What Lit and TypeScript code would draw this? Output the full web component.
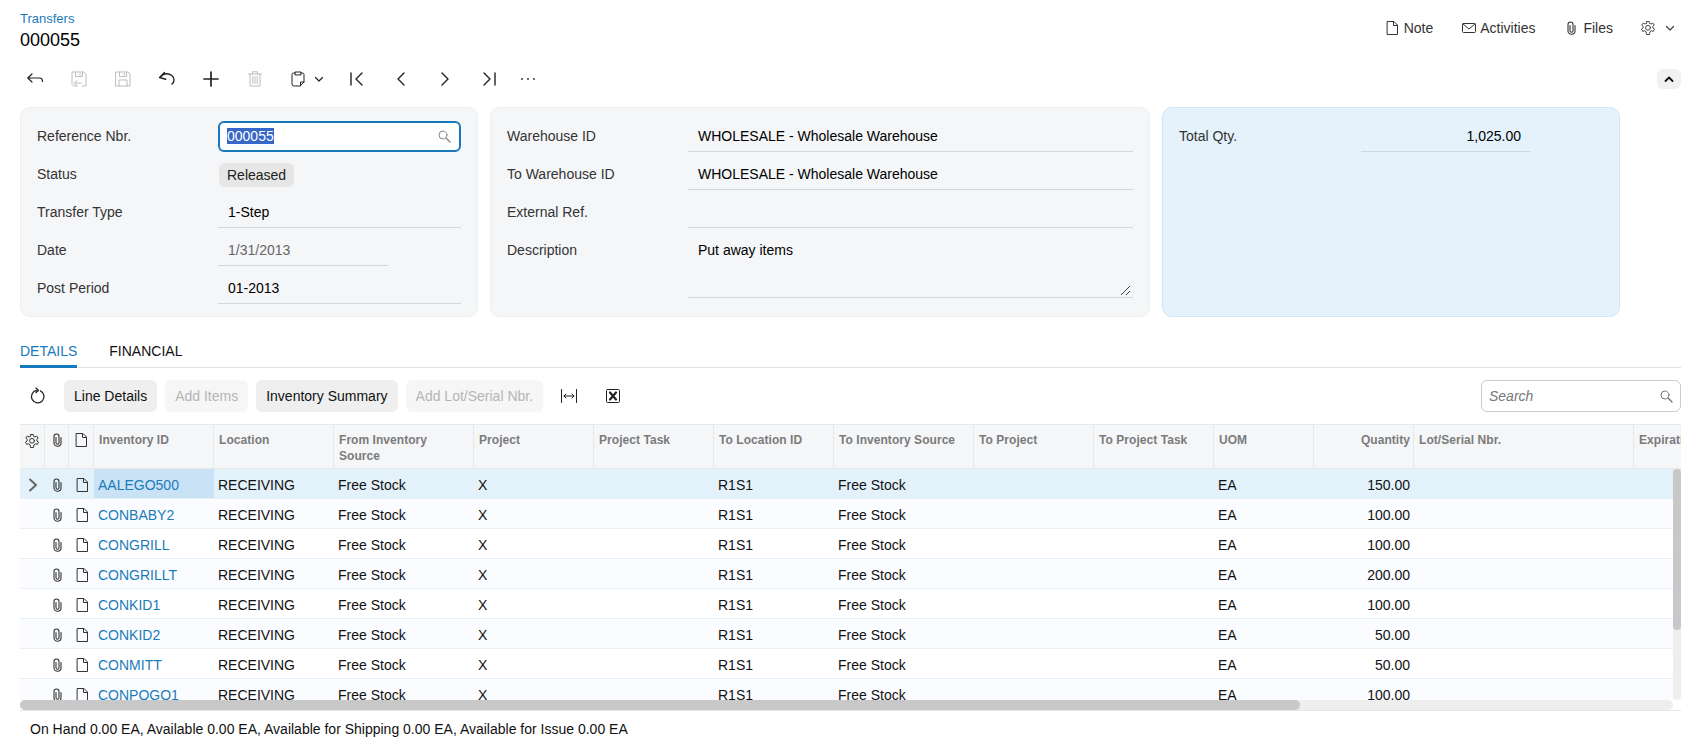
import { LitElement, html, css, svg } from "lit";
import { customElement } from "lit/decorators.js";

const s = (w: number, body: unknown, cls = "") => html`<svg class="ic ${cls}" width="${w}" height="${w}" viewBox="0 0 ${w} ${w}" fill="none" stroke="currentColor" stroke-width="1" stroke-linecap="round" stroke-linejoin="round">${body}</svg>`;

const note = () => s(14, svg`<path d="M2.5 .5H9L12.5 4V13.5H2.5ZM8.5 .5V4.5H12.5"/>`);
const clip = () => s(14, svg`<path d="M11 4.5V10C11 12 9.2 13.2 7.5 13.2S4 12 4 10V3.5C4 2 5.2 1 6.5 1S9 2 9 3.5V9.8C9 10.7 8.4 11.2 7.5 11.2S6 10.7 6 9.8V4.5" stroke-width="1.1"/>`);
const gear = () => s(16, svg`<path d="M6.8 1.5H9.2L9.6 3.4 11 4 12.7 3 14.2 5 12.9 6.4V8L14.5 9.2 13.3 11.4 11.3 10.8 10 11.8 9.4 14.5H6.6L6 11.8 4.7 10.8 2.7 11.4 1.5 9.2 3.1 8V6.4L1.8 5 3.3 3 5 4 6.4 3.4Z"/><circle cx="8" cy="7.8" r="2.4"/>`);
const chev = () => s(10, svg`<path d="M1.5 3.5 5 7 8.5 3.5" stroke-width="1.2"/>`);
const mag = () => s(14, svg`<circle cx="6" cy="6" r="4"/><path d="M9 9 13 13" stroke-width="1.4"/>`);

const topIcons = [
  s(20, svg`<path d="M7 5 2.8 9 7 13M3 9H14.5C16.5 9 17.5 10.3 17.5 12.5" stroke-width="1.2"/>`),
  s(20, svg`<path d="M8 17H4.5L3 15.5V3H15L17 5V17H13M6.5 3V7.5H13.5V3M11 4.2V6.3M12.5 14H5.5M8 11.5 5.3 14 8 16.5"/>`, "off"),
  s(20, svg`<path d="M3 3H15L17 5V17H3ZM6.5 3V7.5H13.5V3M11.2 4.2V6.3M6 17V11H14V17"/>`, "off"),
  s(20, svg`<path d="M7.5 3.5 2.5 8.5 8.7 10.2M3.5 8.3C5 6 7 4.8 10 4.8 13.5 4.8 17 7.5 17 11 17 12.8 16 14.2 15 15" stroke-width="1.4"/>`),
  s(20, svg`<path d="M10 3V17M3 10H17" stroke-width="1.7"/>`),
  s(20, svg`<path d="M3.5 5H16.5M7.5 5V2.8H12.5V5M5 5V17H15V5M7.8 7.5V14.5M10 7.5V14.5M12.2 7.5V14.5"/>`, "off"),
];
const navIcons = [
  s(20, svg`<path d="M4 4V16M15 4 9 10 15 16" stroke-width="1.4"/>`),
  s(20, svg`<path d="M13 4 7 10 13 16" stroke-width="1.4"/>`),
  s(20, svg`<path d="M7 4 13 10 7 16" stroke-width="1.4"/>`),
  s(20, svg`<path d="M16 4V16M5 4 11 10 5 16" stroke-width="1.4"/>`),
];
const dots = s(20, svg`<circle cx="4" cy="10" r=".9" fill="currentColor" stroke="none"/><circle cx="10" cy="10" r=".9" fill="currentColor" stroke="none"/><circle cx="16" cy="10" r=".9" fill="currentColor" stroke="none"/>`);

const heads = ["Inventory ID", "Location", "From Inventory Source", "Project", "Project Task", "To Location ID", "To Inventory Source", "To Project", "To Project Task", "UOM", "Quantity", "Lot/Serial Nbr.", "Expiration Date"];
const rows: [string, string][] = [
  ["AALEGO500", "150.00"], ["CONBABY2", "100.00"], ["CONGRILL", "100.00"], ["CONGRILLT", "200.00"],
  ["CONKID1", "100.00"], ["CONKID2", "50.00"], ["CONMITT", "50.00"], ["CONPOGO1", "100.00"],
];

@customElement("app-root")
export class AppRoot extends LitElement {
  static styles = css`
    :host { display: block; height: 744px; overflow: hidden; background: #fff; color: #000; font: 14px "Liberation Sans", Arial, sans-serif; }
    * { box-sizing: border-box; }
    .ic { display: block; flex: none; }
    .off { color: #bdbdbd; }
    .page { display: flex; flex-direction: column; padding: 0 18px 0 20px; }
    .head { height: 62px; display: flex; justify-content: space-between; }
    .crumb { color: #1a7bb9; font-size: 13px; line-height: 14px; margin-top: 12px; }
    .title { font-size: 18px; line-height: 20px; margin-top: 4px; }
    .actions { display: flex; align-items: center; height: 56px; color: #333; }
    .act { display: flex; align-items: center; gap: 5px; }
    .act.note { margin-right: 29px; }
    .act.mail { margin-right: 29px; gap: 4px; }
    .act.files { margin-right: 27px; gap: 5px; }
    .act.gear { gap: 9px; margin-right: 6px; color: #444; }
    .toolbar { height: 34px; display: flex; align-items: center; margin-left: -7px; color: #222; }
    .tb { width: 44px; display: flex; justify-content: center; flex: none; }
    .tb.clip { width: 58px; justify-content: flex-start; align-items: center; gap: 6px; padding-left: 11px; }
    .tb.dots { margin-left: -5px; }
    .collapse { margin-left: auto; width: 24px; height: 20px; border-radius: 6px; background: #f1f1f1; display: flex; align-items: center; justify-content: center; color: #111; }
    .panels { margin-top: 11px; display: grid; grid-template-columns: 458px 660px 458px; column-gap: 12px; height: 210px; }
    .panel { background: #f5f6f8; border: 1px solid #eceef1; border-radius: 10px; padding: 9px 16px 0 16px; display: flex; flex-direction: column; }
    .panel.blue { background: #e5f2fb; border-color: #d3e6f4; }
    .row { display: grid; height: 38px; align-items: center; flex: none; }
    .p1 .row { grid-template-columns: 181px 1fr; }
    .p2 .row { grid-template-columns: 181px 1fr; }
    .p3 .row { grid-template-columns: 182px 170px; }
    .lbl { color: #333; }
    .field { align-self: start; height: 35px; border-bottom: 1px solid #d3d6da; padding: 3px 10px 0; display: flex; align-items: center; }
    .field.short { width: 170px; color: #666; }
    .field.num { justify-content: flex-end; }
    .input { height: 31px; border: 2px solid #1779bd; border-radius: 6px; background: #fff; display: flex; align-items: center; justify-content: space-between; padding: 0 8px 0 7px; color: #fff; }
    .input span { background: #3566c8; line-height: 16px; }
    .input .ic { color: #888; }
    .chip { justify-self: start; height: 24px; border-radius: 6px; background: #e6e6e6; padding: 0 8px; display: flex; align-items: center; margin: 2px 0 0 1px; color: #222; }
    .desc { height: 70px; align-items: start; }
    .desc .lbl { padding-top: 11px; }
    .desc .field { height: 67px; align-items: flex-start; padding-top: 11px; position: relative; }
    .grip { position: absolute; right: 1px; bottom: 1px; color: #444; }
    .tabs { margin-top: 24px; height: 27px; display: flex; gap: 32px; border-bottom: 1px solid #e0e0e0; }
    .tab { line-height: 21px; height: 27px; color: #111; }
    .tab.on { color: #1a7bb9; border-bottom: 3px solid #1779bd; }
    .gridbar { height: 56px; display: flex; align-items: center; }
    .reload { width: 44px; display: flex; justify-content: flex-start; padding-left: 9px; color: #222; }
    .btn { height: 32px; border-radius: 6px; background: #efefef; padding: 0 10px; display: flex; align-items: center; margin-right: 8px; color: #111; }
    .btn.dis { background: #f6f6f6; color: #b5b5b5; }
    .gi { width: 44px; display: flex; justify-content: center; color: #222; }
    .gi.fit { margin-left: -4px; }
    .search { margin-left: auto; width: 200px; height: 32px; border: 1px solid #ccc; border-radius: 6px; display: flex; align-items: center; justify-content: space-between; padding: 0 7px; color: #777; font-style: italic; }
    .table { position: relative; height: 287px; overflow: hidden; border-bottom: 1px solid #e6e6e6; }
    .line { display: grid; grid-template-columns: 25px 24px 25px 120px 120px 140px 120px 120px 120px 140px 120px 120px 100px 100px 220px 120px; width: max-content; }
    .th { height: 45px; background: #f5f6f8; border-top: 1px solid #e6e8eb; border-bottom: 1px solid #e6e8eb; }
    .th > div { border-right: 1px solid #e6e8eb; padding: 7px 5px 0; font-size: 12px; font-weight: 700; line-height: 16px; color: #7b7b7b; letter-spacing: .05px; overflow: hidden; }
    .th > .ico { padding: 8px 0 0; display: flex; justify-content: center; color: #333; }
    .th > .right { text-align: right; padding-right: 3px; }
    .body { height: 231px; overflow: hidden; }
    .tr { height: 30px; border-bottom: 1px solid #e8f0f7; align-items: center; background: #fff; }
    .tr.alt { background: #fbfcff; }
    .tr.sel { background: #e3f1fb; }
    .tr > div { height: 100%; display: flex; align-items: center; padding: 2px 4px 0; white-space: nowrap; color: #111; overflow: hidden; }
    .tr > .ico { padding: 2px 0 0; justify-content: center; color: #333; }
    .tr > .ico.chevgray { color: #666; }
    .tr > .link { color: #1a7bb9; }
    .tr.sel > .link { background: #c9e2f5; }
    .tr > .right { justify-content: flex-end; padding-right: 4px; }
    .vbar { position: absolute; right: 0; top: 45px; width: 8px; height: 231px; border-radius: 4px; background: #eee; }
    .vthumb { height: 161px; border-radius: 4px; background: #c8c8c8; }
    .hbar { position: absolute; left: 0; right: 8px; top: 276px; height: 10px; border-radius: 5px; background: #eee; }
    .hthumb { width: 1280px; height: 10px; border-radius: 5px; background: #c8c8c8; }
    .status { padding: 10px 0 0 10px; line-height: 16px; color: #111; }
  `;

  private field(label: string, val: string, cls = "") {
    return html`<div class="row"><div class="lbl">${label}</div><div class="field ${cls}">${val}</div></div>`;
  }

  render() {
    return html`<div class="page">
      <div class="head">
        <div><div class="crumb">Transfers</div><div class="title">000055</div></div>
        <div class="actions">
          <div class="act note">${note()}<span>Note</span></div>
          <div class="act mail">${s(14, svg`<rect x=".5" y="2.5" width="13" height="9" rx="1"/><path d="M1 3 7 8 13 3"/>`)}<span>Activities</span></div>
          <div class="act files">${clip()}<span>Files</span></div>
          <div class="act gear">${gear()}${chev()}</div>
        </div>
      </div>
      <div class="toolbar">
        ${topIcons.map((i) => html`<div class="tb">${i}</div>`)}
        <div class="tb clip">${s(20, svg`<path d="M7 4H5.5Q4 4 4 5.5V15Q4 17 6 17H12L16 13V5.5Q16 4 14.5 4H13M7 5.5V3H13V5.5ZM16 13H12.5V17"/>`)}${chev()}</div>
        ${navIcons.map((i) => html`<div class="tb">${i}</div>`)}
        <div class="tb dots">${dots}</div>
        <div class="collapse">${s(10, svg`<path d="M1.5 7 5 3.5 8.5 7" stroke-width="1.8"/>`)}</div>
      </div>
      <div class="panels">
        <div class="panel p1">
          <div class="row"><div class="lbl">Reference Nbr.</div><div class="input"><span>000055</span>${mag()}</div></div>
          <div class="row"><div class="lbl">Status</div><div class="chip">Released</div></div>
          ${this.field("Transfer Type", "1-Step")}
          ${this.field("Date", "1/31/2013", "short")}
          ${this.field("Post Period", "01-2013")}
        </div>
        <div class="panel p2">
          ${this.field("Warehouse ID", "WHOLESALE - Wholesale Warehouse")}
          ${this.field("To Warehouse ID", "WHOLESALE - Wholesale Warehouse")}
          ${this.field("External Ref.", "")}
          <div class="row desc"><div class="lbl">Description</div><div class="field">Put away items
            <svg class="grip" width="14" height="14" viewBox="0 0 14 14" fill="none" stroke="currentColor"><path d="M3 13 12 4M8 13 12 9"/></svg></div></div>
        </div>
        <div class="panel blue p3">${this.field("Total Qty.", "1,025.00", "num")}</div>
      </div>
      <div class="tabs"><div class="tab on">DETAILS</div><div class="tab">FINANCIAL</div></div>
      <div class="gridbar">
        <div class="reload">${s(18, svg`<path d="M7.5 3.4A6.3 6.3 0 1 0 11.5 3.9M7 1 9.5 3.4 7 5.6" stroke-width="1.3"/>`)}</div>
        <div class="btn">Line Details</div>
        <div class="btn dis">Add Items</div>
        <div class="btn">Inventory Summary</div>
        <div class="btn dis">Add Lot/Serial Nbr.</div>
        <div class="gi fit">${s(18, svg`<path d="M1.5 2.5V15.5M16.5 2.5V15.5M4 9H14M6 7 4 9 6 11M12 7 14 9 12 11"/>`)}</div>
        <div class="gi">${s(14, svg`<rect x=".5" y=".5" width="13" height="13" rx="1"/><path d="M4 3.5 10 10.5M10 3.5 4 10.5" stroke-width="2.2"/>`)}</div>
        <div class="search"><span>Search</span>${mag()}</div>
      </div>
      <div class="table">
        <div class="line th">
          <div class="ico">${gear()}</div><div class="ico">${clip()}</div><div class="ico">${note()}</div>
          ${heads.map((h) => html`<div class="${h === "Quantity" ? "right" : ""}">${h === "Expiration Date" ? "Expiration" : h}</div>`)}
        </div>
        <div class="body">
          ${rows.map(([id, q], i) => html`<div class="line tr ${i === 0 ? "sel" : i % 2 ? "alt" : ""}">
            <div class="ico chevgray">${i === 0 ? s(14, svg`<path d="M4 1.5 10 7 4 12.5" stroke-width="2"/>`) : ""}</div>
            <div class="ico">${clip()}</div><div class="ico">${note()}</div>
            <div class="link">${id}</div><div>RECEIVING</div><div>Free Stock</div><div>X</div><div></div>
            <div>R1S1</div><div>Free Stock</div><div></div><div></div><div>EA</div>
            <div class="right">${q}</div><div></div><div></div>
          </div>`)}
        </div>
        <div class="vbar"><div class="vthumb"></div></div>
        <div class="hbar"><div class="hthumb"></div></div>
      </div>
      <div class="status">On Hand 0.00 EA, Available 0.00 EA, Available for Shipping 0.00 EA, Available for Issue 0.00 EA</div>
    </div>`;
  }
}
